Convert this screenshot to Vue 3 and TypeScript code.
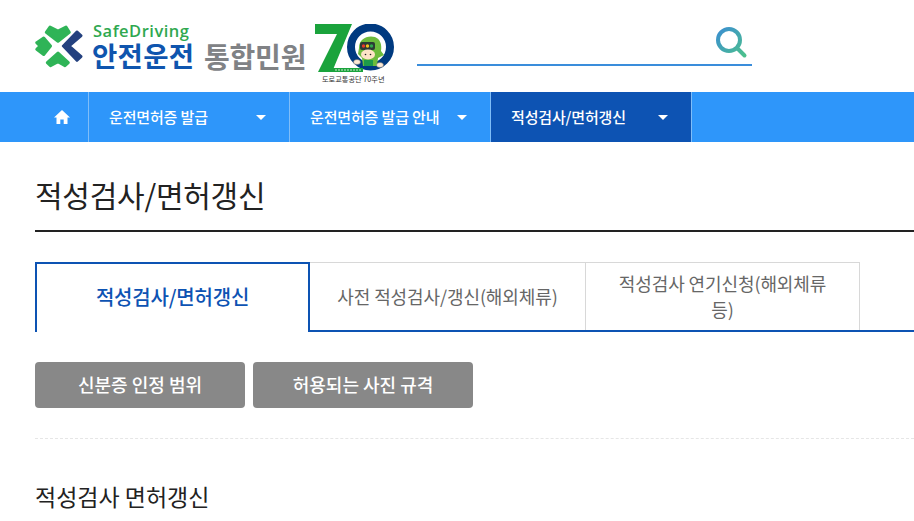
<script setup lang="ts">
const navItems = [
  { label: "운전면허증 발급", active: false },
  { label: "운전면허증 발급 안내", active: false },
  { label: "적성검사/면허갱신", active: true },
];
const tabs = [
  { label: "적성검사/면허갱신", active: true },
  { label: "사전 적성검사/갱신(해외체류)", active: false },
  { label: "적성검사 연기신청(해외체류 등)", active: false },
];
const buttons = [
  { label: "신분증 인정 범위", cls: "btn-a" },
  { label: "허용되는 사진 규격", cls: "btn-b" },
];
</script>

<template>
  <div class="page">
    <header class="header">
      <div class="logo">
        <svg class="logo-mark" width="50" height="44" viewBox="0 0 50 44">
          <g fill="#2fb457" stroke="#2fb457" stroke-width="3" stroke-linejoin="round">
            <path d="M15 3 L23 7 L31 3 L34.300 8.300 L23 17.200 L11.300 8.300 Z" />
            <path d="M8.700 14 L15.500 22 L8.700 30.500 L1.800 25.300 L5 22 L1.800 18.700 Z" />
            <path d="M23 29 L33.300 38.700 L30 41.700 L23 37.700 L15.500 41.700 L12.300 38.700 Z" />
          </g>
          <path d="M28 22 L42 7.700 L46.300 11.700 L34.300 22 L46.300 32.500 L42 36.700 Z" fill="#24417f" stroke="#24417f" stroke-width="2.500" stroke-linejoin="round" />
        </svg>
        <div class="logo-name">
          <span class="logo-en">SafeDriving</span>
          <span class="logo-ko">안전운전</span>
        </div>
        <span class="logo-sub">통합민원</span>
        <div class="anniv">
          <svg width="80" height="50" viewBox="0 0 80 50">
            <circle cx="55.500" cy="23" r="19.500" fill="#fff" stroke="#003a80" stroke-width="8" />
            <path d="M0 0 H37 L17 48 H3 L22 10 H0 Z" fill="#1aa33c" />
            <rect x="15" y="44" width="33" height="4" fill="#1aa33c" />
            <line x1="20" y1="46" x2="46" y2="46" stroke="#cfe8d2" stroke-width="1" stroke-dasharray="2 1" />
            <path d="M44 24 C44 15 52 11 60 13 C65 15 67 20 66 27 L69 31 L63 34 L62 42 H48 L47 34 L43 30 Z" fill="#6cbb3c" />
            <rect x="45" y="18" width="15" height="8" rx="2" fill="#2c3a35" />
            <circle cx="48.500" cy="22" r="1.700" fill="#e5392c" />
            <circle cx="52.500" cy="22" r="1.700" fill="#f2c01d" />
            <circle cx="56.500" cy="22" r="1.700" fill="#2fa84f" />
            <ellipse cx="53" cy="30.500" rx="7" ry="5" fill="#fde3c6" />
            <circle cx="50.500" cy="30.500" r=".8" fill="#222" />
            <circle cx="55.500" cy="30.500" r=".8" fill="#222" />
            <rect x="49" y="36" width="9" height="6" fill="#1d9a4b" />
            <ellipse cx="42" cy="38" rx="3.500" ry="2.500" fill="#fde9d5" stroke="#666" stroke-width=".5" />
            <ellipse cx="65" cy="41" rx="3.500" ry="2.500" fill="#fde9d5" stroke="#666" stroke-width=".5" />
          </svg>
          <span class="anniv-text">도로교통공단 70주년</span>
        </div>
      </div>
      <div class="search">
        <svg width="33" height="33" viewBox="0 0 33 33">
          <defs>
            <linearGradient id="searchGrad" x1="0" y1="0" x2="1" y2="1">
              <stop offset="0" stop-color="#3b8fd0" />
              <stop offset="1" stop-color="#4cc08d" />
            </linearGradient>
          </defs>
          <path d="M14 3a11 11 0 1 0 0 22a11 11 0 1 0 0-22M22.500 22.500L29.500 29.500" fill="none" stroke="url(#searchGrad)" stroke-width="4" stroke-linecap="round" />
        </svg>
      </div>
    </header>

    <nav class="nav">
      <a class="nav-home">
        <svg width="16" height="14" viewBox="0 0 16 14">
          <path d="M8 0 L16 7.500 H13.500 V14 H9.700 V9.500 H6.300 V14 H2.500 V7.500 H0 Z" fill="#fff" />
        </svg>
      </a>
      <a v-for="item in navItems" :key="item.label" class="nav-item" :class="{ active: item.active }">
        <span>{{ item.label }}</span>
        <i class="caret"></i>
      </a>
    </nav>

    <main class="content">
      <h1 class="title">적성검사/면허갱신</h1>

      <ul class="tabs">
        <li v-for="tab in tabs" :key="tab.label" class="tab" :class="{ active: tab.active }">
          <span>{{ tab.label }}</span>
        </li>
      </ul>

      <div class="btn-row">
        <button v-for="b in buttons" :key="b.label" class="btn" :class="b.cls">{{ b.label }}</button>
      </div>

      <h2 class="section">적성검사 면허갱신</h2>
    </main>
  </div>
</template>

<style>
html,
body {
  margin: 0;
  overflow: hidden;
}
</style>

<style scoped>
.page {
  width: 914px;
  height: 521px;
  overflow: hidden;
  background: #fff;
  font-family: "Noto Sans CJK KR", "Noto Sans", sans-serif;
  color: #222;
}

.header {
  height: 92px;
  display: flex;
  padding-left: 35px;
  box-sizing: border-box;
}

.logo {
  display: flex;
  width: 382px;
}

.logo-mark {
  margin-top: 24px;
  margin-right: 8px;
}

.logo-name {
  display: flex;
  flex-direction: column;
  padding-top: 22px;
  width: 101px;
}

.logo-en {
  font-family: "Open Sans", sans-serif;
  font-size: 16.500px;
  line-height: 18px;
  font-weight: 600;
  color: #2fa84f;
  letter-spacing: 0.5px;
}

.logo-ko {
  font-size: 27.500px;
  line-height: 30px;
  font-weight: 700;
  color: #0f55ae;
  letter-spacing: 0.3px;
  margin-left: -1px;
  white-space: nowrap;
}

.logo-sub {
  font-size: 28px;
  line-height: 30px;
  font-weight: 700;
  color: #808285;
  margin: 41px 0 0 10px;
  width: 101px;
  letter-spacing: -0.2px;
  white-space: nowrap;
}

.anniv {
  position: relative;
  margin: 24px 0 0 10px;
  width: 80px;
}

.anniv svg {
  display: block;
}

.anniv-text {
  position: absolute;
  left: 7px;
  top: 50px;
  font-size: 7.200px;
  line-height: 10px;
  white-space: nowrap;
  color: #333;
}

.search {
  width: 335px;
  height: 40px;
  margin-top: 26px;
  border-bottom: 2px solid #3a8ddb;
  display: flex;
  justify-content: flex-end;
  padding-right: 4px;
  box-sizing: border-box;
}

.nav {
  height: 50px;
  background: #2e96fa;
  display: flex;
  padding-left: 35px;
}

.nav-home {
  width: 54px;
  display: flex;
  align-items: center;
  justify-content: center;
  border-right: 1px solid #7fbdf8;
  box-sizing: border-box;
}

.nav-item {
  width: 201px;
  display: flex;
  align-items: center;
  justify-content: space-between;
  padding: 0 23px 2px 20px;
  box-sizing: border-box;
  border-right: 1px solid #7fbdf8;
  color: #fff;
  font-size: 15px;
  font-weight: 500;
  letter-spacing: -0.15px;
}

.nav-item.active {
  background: #0d53b3;
}

.caret {
  width: 0;
  height: 0;
  margin-top: 2px;
  border-left: 5px solid transparent;
  border-right: 5px solid transparent;
  border-top: 5px solid #fff;
}

.content {
  padding-left: 35px;
}

.title {
  margin: 0;
  height: 88px;
  box-sizing: content-box;
  border-bottom: 2px solid #222;
  font-size: 30px;
  font-weight: 400;
  line-height: 104px;
  letter-spacing: -0.25px;
}

.tabs {
  list-style: none;
  display: flex;
  margin: 30px 0 0;
  padding: 0;
  height: 70px;
  border-bottom: 2px solid #0d53b3;
  box-sizing: border-box;
}

.tab {
  width: 275px;
  height: 68px;
  padding: 0 25px 2px;
  box-sizing: border-box;
  display: flex;
  align-items: center;
  justify-content: center;
  text-align: center;
  border-top: 1px solid #d8d8d8;
  border-right: 1px solid #d8d8d8;
  font-size: 18px;
  line-height: 26px;
  letter-spacing: -0.1px;
  color: #666;
}

.tab:nth-child(2) {
  width: 276px;
}

.tab:nth-child(3) {
  width: 274px;
}

.tab.active {
  height: 70px;
  border: 2px solid #0d53b3;
  border-bottom: 0;
  background: #fff;
  color: #0d53b3;
  font-size: 20px;
  font-weight: 500;
  letter-spacing: -0.2px;
}

.btn-row {
  display: flex;
  gap: 8px;
  padding: 30px 0;
  border-bottom: 1px dashed #e6e6e6;
}

.btn {
  height: 46px;
  border: none;
  border-radius: 4px;
  background: #888;
  color: #fff;
  font-family: inherit;
  font-size: 18px;
  font-weight: 500;
  padding: 0 0 2px;
}

.btn-a {
  width: 210px;
}

.btn-b {
  width: 220px;
}

.section {
  margin: 41px 0 0;
  font-size: 23px;
  font-weight: 400;
  line-height: 32px;
}
</style>
